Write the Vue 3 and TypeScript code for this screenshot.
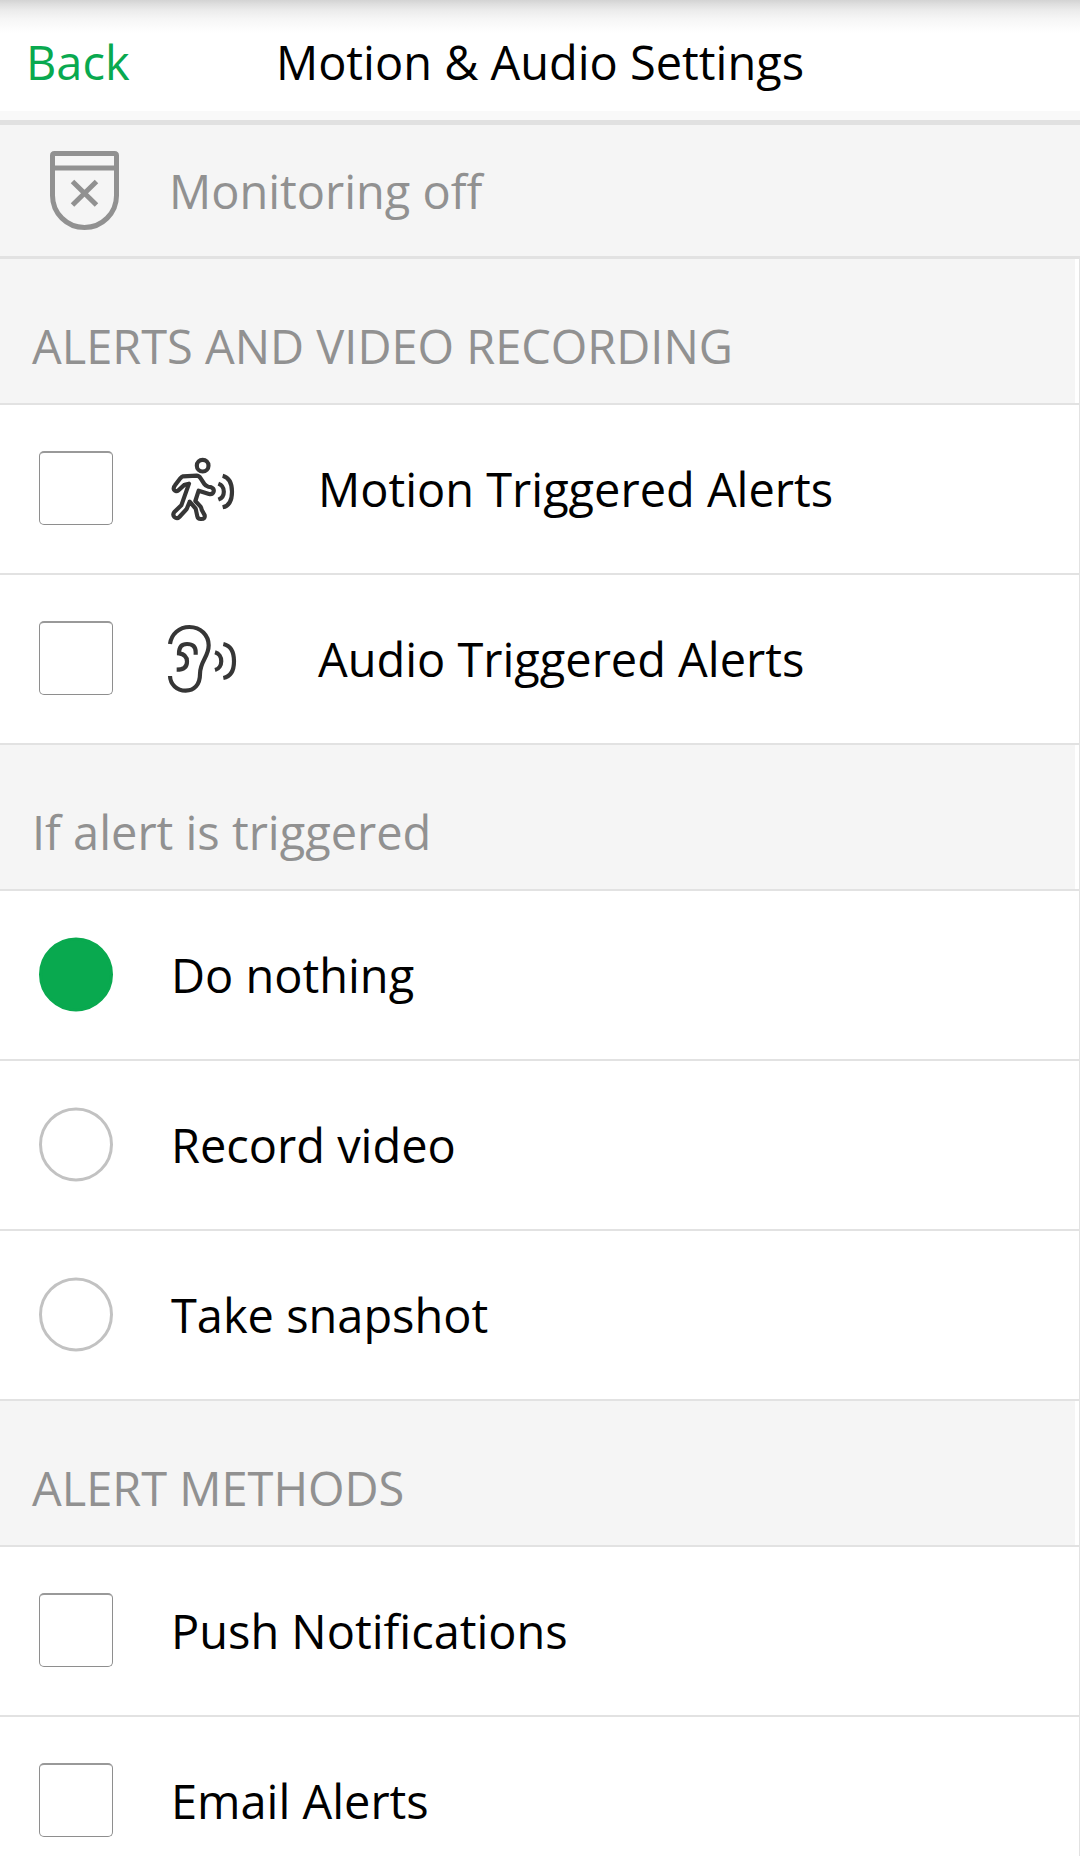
<script setup lang="ts">
import { ref } from 'vue'

interface Option {
  id: string
  label: string
  icon?: 'motion' | 'audio'
}

interface Section {
  title: string
  kind: 'check' | 'radio'
  options: Option[]
}

const sections: Section[] = [
  {
    title: 'ALERTS AND VIDEO RECORDING',
    kind: 'check',
    options: [
      { id: 'motion', label: 'Motion Triggered Alerts', icon: 'motion' },
      { id: 'audio', label: 'Audio Triggered Alerts', icon: 'audio' },
    ],
  },
  {
    title: 'If alert is triggered',
    kind: 'radio',
    options: [
      { id: 'nothing', label: 'Do nothing' },
      { id: 'record', label: 'Record video' },
      { id: 'snapshot', label: 'Take snapshot' },
    ],
  },
  {
    title: 'ALERT METHODS',
    kind: 'check',
    options: [
      { id: 'push', label: 'Push Notifications' },
      { id: 'email', label: 'Email Alerts' },
    ],
  },
]

const selected = ref<string>('nothing')

function choose(section: Section, option: Option) {
  if (section.kind === 'radio') selected.value = option.id
}
</script>

<template>
  <div class="screen">
    <header class="header">
      <a class="back">Back</a>
      <h1 class="title">Motion &amp; Audio Settings</h1>
      <span></span>
    </header>

    <div class="status">
      <svg class="shield" width="69" height="79" viewBox="0 0 69 79" fill="none" stroke="#919191" stroke-width="5">
        <path d="M4.5 2.5H64.5Q66.5 2.5 66.5 4.500V44.500A32 32 0 0 1 2.500 44.500V4.500Q2.500 2.500 4.500 2.500Z" />
        <path d="M2.500 17H66.500M22.500 30.500L46.500 54M46.500 30.500L22.500 54" />
      </svg>
      <span class="status-text">Monitoring off</span>
    </div>

    <main class="list">
      <section v-for="section in sections" :key="section.title">
        <h2 class="heading">{{ section.title }}</h2>
        <div v-for="option in section.options" :key="option.id" class="row" @click="choose(section, option)">
          <span :class="['control', section.kind, { on: selected === option.id }]"></span>
          <svg v-if="option.icon" class="icon" width="110" height="100" viewBox="0 0 330 300" fill="none" stroke="#363636" stroke-width="12.5">
            <g v-if="option.icon === 'motion'">
              <circle cx="158" cy="77" r="17.500" />
              <path stroke-linejoin="round" d="M99 109L140 107Q147 107 152 115L163 132Q167 138 175 140L184 142Q193 146 191 155Q188 164 177 162L146 152L136 183L151 199Q154 203 155 209L164 226Q166 237 154 237Q144 238 142 229L137 206L119 185L110 207L88 231Q81 238 73 231Q67 224 73 216L94 196L117 131L104 134L85 151Q78 157 72 149Q69 143 75 136L91 115Q95 110 99 109Z" />
              <path d="M205 131C227 139 227 171 205 179M218 107C240 113 246 130 246 155S240 197 218 202" />
            </g>
            <g v-else>
              <path d="M60 102C64 72 88 51 118 51C153 51 176 76 176 106C176 142 150 153 150 192C150 225 132 242 107 242C80 242 61 223 60 198" />
              <path d="M137 134V126C137 110 127 102 111 102C95 102 87 112 87 130C104 132 111 142 111 155C111 171 100 179 80 179" />
              <path d="M195 127C220 134 220 173 195 180M220 102C243 107 252 128 252 154S243 200 220 204" />
            </g>
          </svg>
          <span class="label">{{ option.label }}</span>
        </div>
      </section>
    </main>
  </div>
</template>

<style>
body {
  margin: 0;
  overflow: hidden;
}
</style>

<style scoped>
.screen {
  width: 1080px;
  height: 1856px;
  overflow: hidden;
  background: #fff;
  color: #000;
  font-family: 'Open Sans', 'Noto Sans', sans-serif;
  font-size: 46.950px;
  line-height: 66px;
  white-space: nowrap;
}

.header {
  box-sizing: border-box;
  height: 125px;
  padding: 29px 26px 0;
  display: grid;
  grid-template-columns: 1fr auto 1fr;
  align-items: start;
  border-bottom: 5px solid #e1e1e1;
  background:
    linear-gradient(#f9f9f9, #f9f9f9) 0 111px / 100% 9px no-repeat,
    linear-gradient(#d3d3d3 0, #dedede 4px, #ebebeb 10px, #f6f6f6 19px, #fcfcfc 28px, #fff 33px);
}

.back {
  color: #09a94f;
}

.title,
.heading {
  margin: 0;
  font-size: inherit;
  font-weight: 400;
}

.status {
  box-sizing: border-box;
  height: 134px;
  padding: 26px 0 0 50px;
  display: flex;
  align-items: flex-start;
  background: #f5f5f5;
  border-bottom: 3px solid #e2e2e2;
  color: #919191;
}

.status-text {
  margin: 7px 0 0 50px;
}

.list {
  border-right: 1px solid #e2e2e2;
}

.heading {
  box-sizing: border-box;
  height: 146px;
  padding: 54px 0 0 32px;
  color: #919191;
  background: linear-gradient(#f5f5f5, #f5f5f5) 0 0 / 1075px 144px no-repeat;
  border-bottom: 2px solid #e2e2e2;
}

.row {
  box-sizing: border-box;
  height: 170px;
  padding-left: 39px;
  display: flex;
  align-items: flex-start;
  border-bottom: 2px solid #e2e2e2;
}

.control {
  box-sizing: border-box;
  width: 74px;
  height: 74px;
  margin-top: 46px;
}

.check {
  border: 1px solid #8e8e8e;
  border-top: 2px solid #999;
  border-radius: 5px;
}

.radio {
  border: 3px solid #c2c2c2;
  border-radius: 50%;
  transform: translateY(0.4px);
}

.radio.on {
  border-color: #09a94f;
  background: #09a94f;
}

.icon {
  margin: 35px 0 0 37px;
}

.label {
  margin: 51px 0 0 58px;
}

.icon + .label {
  margin-left: 58px;
}
</style>
